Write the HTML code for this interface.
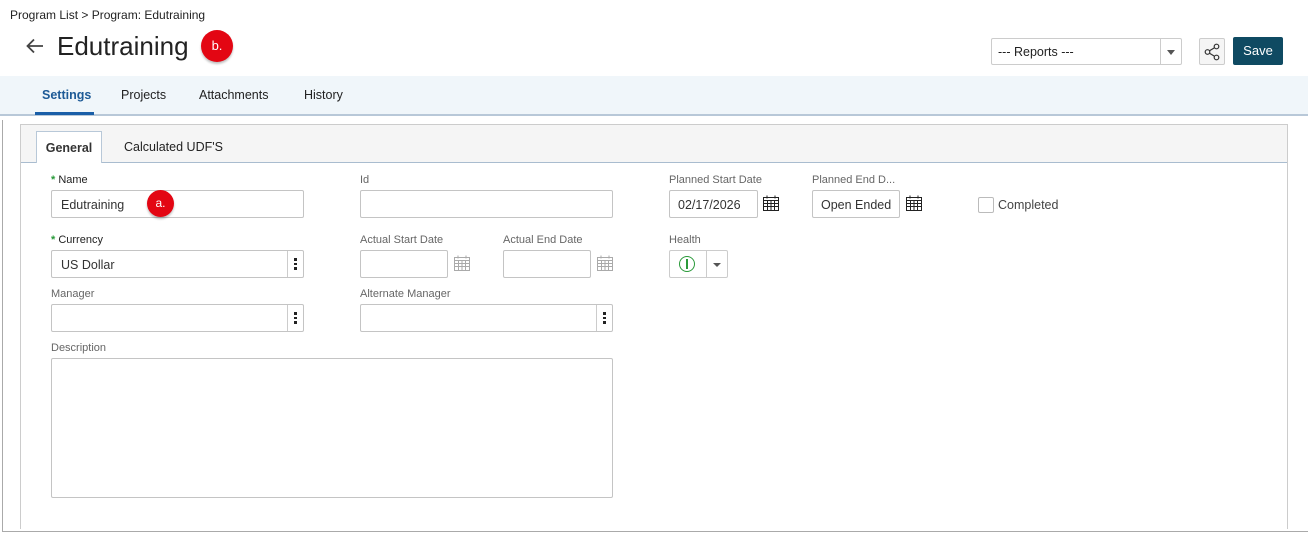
<!DOCTYPE html>
<html><head><style>
*{box-sizing:border-box;margin:0;padding:0}
body{width:1312px;height:533px;background:#fff;font-family:"Liberation Sans",sans-serif;position:relative;overflow:hidden;color:#333}
.a{position:absolute}
.lbl{position:absolute;font-size:11px;color:#666}
.req{color:#222}
.req b{color:#2a9a3a;font-weight:bold}
.inp{position:absolute;border:1px solid #c4c4c4;border-radius:2px;background:#fff;font-size:12.5px;color:#333;padding-left:9px;line-height:28px}
.dots{position:absolute;right:0;top:0;bottom:0;width:16px;border-left:1px solid #ccc;display:flex;flex-direction:column;align-items:center;justify-content:center;gap:2px}
.dots i{width:2.5px;height:2.5px;background:#222;display:block}
.badge{position:absolute;border-radius:50%;background:#e30613;color:#fff;text-align:center;box-shadow:0 2px 2px rgba(0,0,0,.25)}
</style></head><body>
<div class="a" style="left:10px;top:8px;font-size:12px;color:#222">Program List &gt; Program: Edutraining</div>
<svg class="a" style="left:26px;top:38px" width="18" height="16" viewBox="0 0 18 16"><path d="M17 8H2M8 1.5L1.5 8 8 14.5" fill="none" stroke="#444" stroke-width="1.8"/></svg>
<div class="a" style="left:57px;top:31px;font-size:26px;color:#222">Edutraining</div>
<div class="badge" style="left:201px;top:30px;width:32px;height:32px;line-height:31px;font-size:13px">b.</div>

<div class="a" style="left:991px;top:38px;width:191px;height:27px;border:1px solid #ccc;border-radius:2px;font-size:12.5px;line-height:26px;padding-left:6px;color:#222">--- Reports ---
<div class="a" style="right:0;top:0;width:21px;height:25px;border-left:1px solid #ccc"></div>
<div class="a" style="right:6px;top:11px;border:4px solid transparent;border-top:5px solid #555;border-bottom:0"></div></div>
<div class="a" style="left:1199px;top:38px;width:26px;height:27px;border:1px solid #ccc;border-radius:2px;background:#f5f5f5">
<svg class="a" style="left:4px;top:4px" width="17" height="18" viewBox="0 0 17 18"><circle cx="12.5" cy="3.5" r="2.3" fill="none" stroke="#333" stroke-width="1.2"/><circle cx="3.5" cy="9" r="2.3" fill="none" stroke="#333" stroke-width="1.2"/><circle cx="12.5" cy="14.5" r="2.3" fill="none" stroke="#333" stroke-width="1.2"/><path d="M5.5 7.8L10.5 4.7M5.5 10.2L10.5 13.3" stroke="#333" stroke-width="1.2"/></svg></div>
<div class="a" style="left:1233px;top:37px;width:50px;height:28px;background:#0f4a62;border-radius:2px;color:#fff;font-size:13px;text-align:center;line-height:28px">Save</div>

<div class="a" style="left:0;top:76px;width:1308px;height:40px;background:#f0f6fa;border-bottom:2px solid #b8c8d8"></div>
<div class="a" style="left:42px;top:88px;font-size:12.5px;color:#1d5a96;font-weight:bold">Settings</div>
<div class="a" style="left:35px;top:112px;width:59px;height:3px;background:#1a5fa8"></div>
<div class="a" style="left:121px;top:88px;font-size:12.5px;color:#222">Projects</div>
<div class="a" style="left:199px;top:88px;font-size:12.5px;color:#222">Attachments</div>
<div class="a" style="left:304px;top:88px;font-size:12.5px;color:#222">History</div>

<div class="a" style="left:2px;top:120px;width:1px;height:412px;background:#aaa"></div>
<div class="a" style="left:2px;top:531px;width:1306px;height:1px;background:#aaa"></div>
<div class="a" style="left:20px;top:124px;width:1268px;height:405px;border:1px solid #ccc;border-bottom:0"></div>
<div class="a" style="left:21px;top:125px;width:1266px;height:38px;background:#f5f5f5;border-bottom:1px solid #a9bccf"></div>
<div class="a" style="left:36px;top:131px;width:66px;height:32px;background:#fff;border:1px solid #b8c8d8;border-bottom:0;font-size:12.5px;color:#333;text-align:center;line-height:32px;font-weight:bold">General</div>
<div class="a" style="left:124px;top:140px;font-size:12.5px;color:#222">Calculated UDF'S</div>

<div class="lbl req" style="left:51px;top:174px"><b>*</b> Name</div>
<div class="inp" style="left:51px;top:190px;width:253px;height:28px">Edutraining</div>
<div class="badge" style="left:147px;top:190px;width:27px;height:27px;line-height:26px;font-size:12px">a.</div>
<div class="lbl" style="left:360px;top:174px">Id</div>
<div class="inp" style="left:360px;top:190px;width:253px;height:28px"></div>

<div class="lbl req" style="left:51px;top:234px"><b>*</b> Currency</div>
<div class="inp" style="left:51px;top:250px;width:253px;height:28px">US Dollar<div class="dots"><i></i><i></i><i></i></div></div>
<div class="lbl" style="left:360px;top:234px">Actual Start Date</div>
<div class="inp" style="left:360px;top:250px;width:88px;height:28px"></div>
<div class="lbl" style="left:503px;top:234px">Actual End Date</div>
<div class="inp" style="left:503px;top:250px;width:88px;height:28px"></div>

<div class="lbl" style="left:51px;top:288px">Manager</div>
<div class="inp" style="left:51px;top:304px;width:253px;height:28px"><div class="dots"><i></i><i></i><i></i></div></div>
<div class="lbl" style="left:360px;top:288px">Alternate Manager</div>
<div class="inp" style="left:360px;top:304px;width:253px;height:28px"><div class="dots"><i></i><i></i><i></i></div></div>

<div class="lbl" style="left:51px;top:342px">Description</div>
<div class="inp" style="left:51px;top:358px;width:562px;height:140px"></div>

<div class="lbl" style="left:669px;top:174px">Planned Start Date</div>
<div class="inp" style="left:669px;top:190px;width:89px;height:28px;padding-left:8px">02/17/2026</div>
<div class="lbl" style="left:812px;top:174px">Planned End D...</div>
<div class="inp" style="left:812px;top:190px;width:88px;height:28px;padding-left:8px">Open Ended</div>
<div class="a" style="left:978px;top:197px;width:16px;height:16px;border:1px solid #bbb;border-radius:2px"></div>
<div class="a" style="left:998px;top:198px;font-size:12.5px;color:#444">Completed</div>

<div class="lbl" style="left:669px;top:234px">Health</div>
<div class="a" style="left:669px;top:250px;width:59px;height:28px;border:1px solid #ccc;border-radius:2px">
<div class="a" style="left:36px;top:0;width:1px;height:26px;background:#ccc"></div>
<div class="a" style="left:9px;top:5px;width:16px;height:16px;border:1.5px solid #2a9a3a;border-radius:50%"></div>
<div class="a" style="left:16px;top:8px;width:2px;height:10px;background:#2a9a3a"></div>
<div class="a" style="left:43px;top:12px;border:4px solid transparent;border-top:4px solid #555;border-bottom:0"></div></div>

<svg width="0" height="0" style="position:absolute"><defs>
<g id="cal"><rect x="0.5" y="2.5" width="15" height="13" fill="none" stroke="currentColor"/><path d="M0.5 5.5H15.5M0.5 8.5H15.5M0.5 11.5H15.5M4.5 5.5V15.5M8 5.5V15.5M11.5 5.5V15.5M4 0.5V3.5M12 0.5V3.5" stroke="currentColor"/></g></defs></svg>
<svg class="a" style="left:763px;top:195px;color:#222" width="16" height="16"><use href="#cal"/></svg>
<svg class="a" style="left:906px;top:195px;color:#222" width="16" height="16"><use href="#cal"/></svg>
<svg class="a" style="left:454px;top:255px;color:#aaa" width="16" height="16"><use href="#cal"/></svg>
<svg class="a" style="left:597px;top:255px;color:#aaa" width="16" height="16"><use href="#cal"/></svg>
</body></html>
